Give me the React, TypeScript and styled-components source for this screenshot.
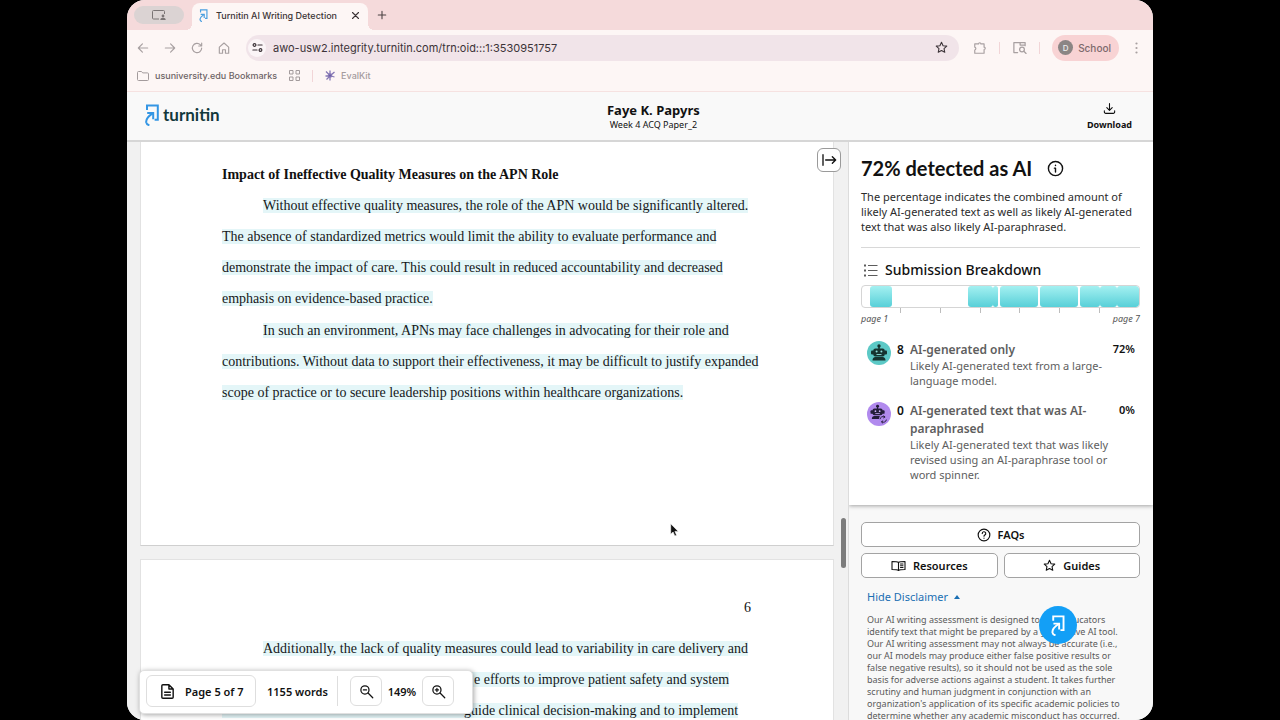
import React from "react";
import styled, { createGlobalStyle } from "styled-components";

const sans = `"Noto Sans", "Open Sans", sans-serif`;
const chromeFont = `Inter, "Liberation Sans", sans-serif`;
const serif = `"Liberation Serif", "Times New Roman", serif`;

const GlobalStyle = createGlobalStyle`
  *, *::before, *::after { box-sizing: border-box; }
  body { margin: 0; background: #000; overflow: hidden; }
  button, input { font: inherit; color: inherit; margin: 0; }
  h1, h2, h3, p, ul { margin: 0; padding: 0; }
  svg { display: block; flex: none; }
`;

/* ---------- Window ---------- */

const Desktop = styled.div`
  height: 100vh;
  padding: 0 127px;
  background: #000;
  font-family: ${sans};
  color: #111;
`;

const BrowserWindow = styled.div`
  display: flex;
  flex-direction: column;
  height: 100%;
  border-radius: 18px;
  overflow: hidden;
  background: #f8f8f8;
`;

/* ---------- Browser chrome ---------- */

const TabStrip = styled.div`
  display: flex;
  align-items: flex-end;
  height: 30px;
  padding-left: 7px;
  background: #f5dadb;
  font-family: ${chromeFont};
`;

const ScreenPill = styled.button`
  display: flex;
  align-items: center;
  justify-content: center;
  width: 50px;
  height: 18px;
  margin: 0 8px 6px 0;
  padding: 0;
  border: 0;
  border-radius: 9px;
  background: #dbd3d3;
  color: #7b7475;
`;

const Tab = styled.div`
  position: relative;
  display: flex;
  align-items: center;
  width: 176px;
  height: 27px;
  padding: 0 8px 3px 7px;
  border-radius: 8px 8px 0 0;
  background: #fdf6f5;
  color: #3c3436;
  font-size: 9px;
  font-weight: 500;
  white-space: nowrap;

  &::before,
  &::after {
    content: "";
    position: absolute;
    bottom: 0;
    width: 6px;
    height: 6px;
  }
  &::before {
    left: -6px;
    background: radial-gradient(circle at 0 0, transparent 6px, #fdf6f5 6px);
  }
  &::after {
    right: -6px;
    background: radial-gradient(circle at 100% 0, transparent 6px, #fdf6f5 6px);
  }
`;

const TabTitle = styled.span`
  flex: 1;
  margin-left: 8px;
`;

const BareButton = styled.button`
  display: flex;
  align-items: center;
  justify-content: center;
  padding: 0;
  border: 0;
  background: none;
`;

const NewTab = styled(BareButton)`
  width: 14px;
  height: 30px;
  margin-left: 7px;
  color: #4a4143;
`;

const NavBar = styled.div`
  display: flex;
  align-items: center;
  height: 35px;
  padding: 0 11px 0 9px;
  background: #fdf6f5;
  font-family: ${chromeFont};
  color: #a8a0a1;
`;

const NavButtons = styled.div`
  display: flex;
  gap: 13px;
  margin-right: 15px;
`;

const AddressBar = styled.label`
  display: flex;
  flex: 1;
  align-items: center;
  gap: 7px;
  height: 26px;
  padding: 0 11px 0 2px;
  border-radius: 13px;
  background: #f1e4e9;
  color: #3c3338;
`;

const SiteBadge = styled.span`
  display: flex;
  align-items: center;
  justify-content: center;
  width: 18px;
  height: 18px;
  border-radius: 50%;
  background: #fbf5f7;
`;

const AddressInput = styled.input`
  flex: 1;
  min-width: 0;
  padding: 0;
  border: 0;
  outline: 0;
  background: none;
  font-size: 11px;
`;

const NavTools = styled.div`
  display: flex;
  align-items: center;
  gap: 12px;
  margin-left: 14px;
`;

const Separator = styled.span`
  width: 1px;
  height: 12px;
  background: #f2d5d7;
`;

const ProfileChip = styled.button`
  display: flex;
  align-items: center;
  gap: 5px;
  height: 26px;
  padding: 0 8px 0 6px;
  border: 0;
  border-radius: 13px;
  background: #f8d3d4;
  color: #7d696c;
  font-size: 10px;
  font-weight: 500;
`;

const Avatar = styled.span`
  display: flex;
  align-items: center;
  justify-content: center;
  width: 15px;
  height: 15px;
  border-radius: 50%;
  background: #8b8584;
  color: #eee;
  font-size: 8px;
`;

const BookmarkBar = styled.div`
  display: flex;
  align-items: center;
  height: 27px;
  padding: 0 10px 5px;
  border-bottom: 1px solid #f6e2e1;
  background: #fdf6f5;
  font-family: ${chromeFont};
  font-size: 9px;
  font-weight: 500;
`;

const Bookmark = styled.a<{ $faded?: boolean }>`
  display: flex;
  align-items: center;
  gap: 6px;
  margin-right: 12px;
  color: ${(p) => (p.$faded ? "#a49b9d" : "#6d6466")};
  text-decoration: none;
`;

const BookmarkDivider = styled(Separator)`
  margin: 0 12px;
`;

/* ---------- App header ---------- */

const AppHeader = styled.header`
  display: flex;
  align-items: center;
  justify-content: space-between;
  height: 50px;
  padding: 2px 21px 0 18px;
  border-bottom: 2px solid #d6d6d6;
  background: #f9f9f9;
`;

const Brand = styled.a`
  display: flex;
  align-items: center;
  gap: 4px;
  padding-bottom: 4px;
  color: #12383c;
  font-family: Lato, sans-serif;
  font-size: 17px;
  font-weight: 700;
  line-height: 20px;
  text-decoration: none;
`;

const PaperTitle = styled.div`
  text-align: center;
`;

const Author = styled.h1`
  font-size: 13px;
  font-weight: 700;
  line-height: 16px;
`;

const PaperName = styled.p`
  font-size: 9px;
  line-height: 14px;
`;

const Download = styled.button`
  display: flex;
  flex-direction: column;
  align-items: center;
  gap: 4px;
  padding: 0 0 2px;
  border: 0;
  background: none;
  font-size: 9px;
  font-weight: 700;
  line-height: 12px;
`;

/* ---------- Document ---------- */

const Main = styled.main`
  display: flex;
  flex: 1;
  min-height: 0;
`;

const Viewer = styled.section`
  position: relative;
  flex: 1;
  min-width: 0;
  padding: 0 14px 0 13px;
  overflow: hidden;
  background: #f1f1f1;
`;

const Sheet = styled.article<{ $next?: boolean }>`
  padding: ${(p) => (p.$next ? "32px 82px 0 81px" : "17px 82px 136px 81px")};
  margin-bottom: 13px;
  border: 1px solid #e2e2e2;
  border-top-width: ${(p) => (p.$next ? "1px" : "0")};
  border-bottom-color: #cfcfcf;
  background: #fff;
  font-family: ${serif};
  font-size: 14px;
  line-height: 31px;
  white-space: nowrap;
`;

const SheetHeading = styled.h2`
  font-size: 14px;
  font-weight: 700;
`;

const Paragraph = styled.p`
  margin-bottom: 1px;
  text-indent: 41px;
`;

/* $lead is the marked stretch that runs under the page bar before the words. */
const Highlight = styled.mark<{ $lead?: number }>`
  padding-left: ${(p) => p.$lead ?? 0}px;
  background: #e4f6f8;
  color: #16181a;
`;

const SheetNumber = styled.div`
  margin-bottom: 10px;
  text-align: right;
`;

const ScrollThumb = styled.div`
  position: absolute;
  top: 376px;
  right: 2px;
  width: 5px;
  height: 50px;
  border-radius: 3px;
  background: #7c7c7c;
`;

const CollapseButton = styled.button`
  position: absolute;
  top: 6px;
  right: 7px;
  display: flex;
  align-items: center;
  justify-content: center;
  width: 24px;
  height: 24px;
  padding: 0;
  border: 1px solid #9a9a9a;
  border-radius: 6px;
  background: #fff;
`;

const Pointer = styled.svg`
  position: absolute;
  top: 381px;
  left: 543px;
`;

const PageBar = styled.div`
  position: absolute;
  bottom: 6px;
  left: 12px;
  display: flex;
  align-items: center;
  width: 334px;
  height: 44px;
  padding: 0 18px 2px 6px;
  border: 1px solid #e0e0e0;
  border-radius: 5px;
  background: #fff;
  box-shadow: 1px 1px 5px rgba(0, 0, 0, 0.35);
  font-size: 11px;
  font-weight: 600;
  white-space: nowrap;
`;

const PageButton = styled.button`
  display: flex;
  align-items: center;
  gap: 9px;
  height: 32px;
  width: 110px;
  padding: 0 12px;
  border: 1px solid #dedede;
  border-radius: 6px;
  background: #fff;
`;

const WordCount = styled.span`
  flex: 1;
  padding-left: 11px;
`;

const BarDivider = styled.span`
  width: 1px;
  height: 30px;
  margin-right: 12px;
  background: #dedede;
`;

const ZoomButton = styled.button`
  display: flex;
  align-items: center;
  justify-content: center;
  width: 32px;
  height: 30px;
  padding: 0;
  border: 1px solid #dedede;
  border-radius: 6px;
  background: #fff;
`;

const ZoomLevel = styled.span`
  width: 40px;
  text-align: center;
`;

/* ---------- Side panel ---------- */

const Panel = styled.aside`
  position: relative;
  width: 305px;
  border-left: 1px solid #dcdcdc;
  background: #f8f8f8;
  overflow: hidden;
`;

const ScoreCard = styled.section`
  padding: 15px 13px 23px 12px;
  background: #fff;
  box-shadow: 0 1px 4px rgba(0, 0, 0, 0.35);
`;

const ScoreTitle = styled.h2`
  display: flex;
  align-items: center;
  gap: 15px;
  font-family: Lato, sans-serif;
  font-size: 20px;
  font-weight: 700;
  line-height: 22px;
`;

const ScoreText = styled.p`
  margin-top: 10px;
  padding-bottom: 13px;
  border-bottom: 1px solid #d8d8d8;
  font-size: 11px;
  line-height: 15px;
  color: #2b2b2b;
`;

const SectionTitle = styled.h3`
  display: flex;
  align-items: center;
  gap: 7px;
  margin-top: 12px;
  padding-left: 2px;
  font-size: 14px;
  font-weight: 500;
  line-height: 20px;
`;

const Strip = styled.div`
  position: relative;
  display: flex;
  height: 23px;
  margin-top: 5px;
  border: 1px solid #d5d5d5;
  border-radius: 4px;
  overflow: hidden;
`;

const StripPart = styled.span<{ $filled?: boolean; $gap?: boolean }>`
  margin-right: ${(p) => (p.$gap ? "2px" : "0")};
  border-radius: 3px;
  background: ${(p) => (p.$filled ? "linear-gradient(#a4f0f1, #58d0d8)" : "none")};
`;

const Ticks = styled.div`
  display: grid;
  grid-template-columns: repeat(7, 1fr);
  height: 5px;

  span:not(:last-child) {
    border-right: 1px solid #bdbdbd;
  }
`;

const StripLabels = styled.div`
  display: flex;
  justify-content: space-between;
  padding-bottom: 2px;
  font-size: 9px;
  font-style: italic;
  line-height: 12px;
  color: #555;
`;

const Finding = styled.div`
  display: grid;
  grid-template-columns: 24px 13px 1fr auto;
  column-gap: 6px;
  padding: 0 5px 0 6px;
  margin-top: 14px;
`;

const FindingCount = styled.span`
  font-size: 12px;
  font-weight: 600;
  line-height: 18px;
`;

const FindingBody = styled.div`
  max-width: 200px;
  margin-left: -6px;
  color: #5e5e5e;
`;

const FindingName = styled.h3`
  font-size: 12px;
  font-weight: 600;
  line-height: 18px;
`;

const FindingText = styled.p`
  margin-top: -1px;
  font-size: 11px;
  line-height: 15px;
`;

const FindingShare = styled.span`
  font-size: 11px;
  font-weight: 600;
  line-height: 15px;
`;

const HelpArea = styled.section`
  padding: 17px 13px 0 12px;
`;

const HelpGrid = styled.div`
  display: grid;
  grid-template-columns: 1fr 1fr;
  gap: 6px;
`;

const HelpButton = styled.button<{ $wide?: boolean }>`
  display: flex;
  align-items: center;
  justify-content: center;
  gap: 7px;
  grid-column: ${(p) => (p.$wide ? "1 / -1" : "auto")};
  height: 25px;
  padding: 0;
  border: 1px solid #a3a3a3;
  border-radius: 5px;
  background: #fff;
  font-size: 11px;
  font-weight: 600;
`;

const DisclaimerToggle = styled.button`
  display: flex;
  align-items: center;
  gap: 6px;
  margin: 11px 0 0 6px;
  padding: 0;
  border: 0;
  background: none;
  color: #1a6fb3;
  font-size: 11px;
  line-height: 16px;
`;

const Disclaimer = styled.p`
  margin: 9px 0 0 6px;
  font-size: 9px;
  line-height: 12px;
  color: #5a5a5a;
  white-space: nowrap;
`;

const ChatButton = styled.button`
  position: absolute;
  right: 76px;
  bottom: 76px;
  display: flex;
  align-items: center;
  justify-content: center;
  width: 38px;
  height: 38px;
  padding: 0;
  border: 0;
  border-radius: 50%;
  background: #139ff6;
`;

/* ---------- Icons ---------- */

type StrokeProps = { w?: number; h?: number; box?: string; sw?: number; children: React.ReactNode };

const Stroke = ({ w = 14, h = w, box = "0 0 24 24", sw = 2, children }: StrokeProps) => (
  <svg width={w} height={h} viewBox={box} fill="none" stroke="currentColor" strokeWidth={sw}
    strokeLinecap="round" strokeLinejoin="round" aria-hidden="true">
    {children}
  </svg>
);

const Logo = ({ w, h, color }: { w: number; h: number; color: string }) => (
  <svg width={w} height={h} viewBox="0 0 14 22" fill="none" stroke={color} strokeWidth="2" aria-hidden="true">
    <path d="M2 6V1.400h10.800v14.400H9.600" />
    <path d="M2.200 9h6v6.200" />
    <path d="M8 9.200C4 11.800.8 15.400 1.200 18.400c.3 1.500 1.400 2.500 3.200 2.800" />
  </svg>
);

const star = <path d="m12 2.500 2.900 6.200 6.800.8-5 4.600 1.300 6.700L12 17.500l-6 3.300 1.300-6.700-5-4.600 6.800-.8z" />;

const Robot = ({ paraphrased }: { paraphrased?: boolean }) => (
  <svg width="24" height="24" viewBox="0 0 24 24" aria-hidden="true">
    <circle cx="12" cy="12" r="12" fill={paraphrased ? "#b18aee" : "#5cc9c6"} />
    <g transform={paraphrased ? "translate(0 -0.200) scale(.88)" : undefined}>
      <g fill={paraphrased ? "#231d3a" : "#16332f"}>
        <circle cx="12" cy="5" r="1.700" />
        <rect x="11.300" y="5" width="1.400" height="4" />
        <rect x="6.300" y="7.600" width="11.400" height="7.800" rx="2" />
        <rect x="4" y="9.600" width="3" height="4" rx="1" />
        <rect x="17" y="9.600" width="3" height="4" rx="1" />
        <path d="M5.500 19.500c0-2.200 1-3.500 3-3.500h7c2 0 3 1.300 3 3.500z" />
      </g>
      <g fill={paraphrased ? "#c9adf5" : "#8fe0dc"}>
        <circle cx="9.600" cy="10.600" r="1" />
        <circle cx="14.400" cy="10.600" r="1" />
        <rect x="9.500" y="13" width="5" height=".9" />
      </g>
    </g>
    {paraphrased && (
      <g>
        <circle cx="16.200" cy="17.400" r="4.400" fill="#b18aee" />
        <path d="M13 17.200a3 3 0 0 1 4.500-2.200M19.400 17.600a3 3 0 0 1-4.500 2.200M16.500 13.600l1.600 1.400-1.800 1M15.900 21.200l-1.600-1.400 1.800-1"
          fill="none" stroke="#2a2140" strokeWidth="1" />
      </g>
    )}
  </svg>
);

/* Runs of the submission along its seven pages; sizes are relative. */
const stripParts = [
  { size: 8, filled: false, gap: false },
  { size: 22, filled: true, gap: false },
  { size: 76, filled: false, gap: false },
  { size: 25, filled: true, gap: false },
  { size: 5, filled: true, gap: true },
  { size: 38, filled: true, gap: true },
  { size: 38, filled: true, gap: true },
  { size: 20, filled: true, gap: false },
  { size: 17, filled: true, gap: false },
  { size: 22, filled: true, gap: false },
];

export default function App() {
  return (
    <>
      <GlobalStyle />
      <Desktop>
        <BrowserWindow>
          <TabStrip>
            <ScreenPill aria-label="Screen sharing">
              <svg width="14" height="10" viewBox="0 0 14 10" aria-hidden="true">
                <path d="M7 9H1.500a1 1 0 0 1-1-1V1.500a1 1 0 0 1 1-1h10a1 1 0 0 1 1 1V4" fill="none" stroke="currentColor" />
                <circle cx="11" cy="6" r="1.400" fill="currentColor" />
                <path d="M8.300 10c0-1.500 1-2.300 2.700-2.300s2.700.8 2.700 2.300z" fill="currentColor" />
              </svg>
            </ScreenPill>
            <Tab>
              <Logo w={9} h={13} color="#4a9fe0" />
              <TabTitle>Turnitin AI Writing Detection</TabTitle>
              <BareButton aria-label="Close tab">
                <Stroke w={9} sw={3}><path d="M4 4l16 16M20 4 4 20" /></Stroke>
              </BareButton>
            </Tab>
            <NewTab aria-label="New tab">
              <Stroke w={10} sw={2.6}><path d="M12 3v18M3 12h18" /></Stroke>
            </NewTab>
          </TabStrip>

          <NavBar>
            <NavButtons>
              <BareButton aria-label="Back"><Stroke><path d="M20 12H4M11 5l-7 7 7 7" /></Stroke></BareButton>
              <BareButton aria-label="Forward"><Stroke><path d="M4 12h16M13 5l7 7-7 7" /></Stroke></BareButton>
              <BareButton aria-label="Reload"><Stroke><path d="M20 12a8 8 0 1 1-2.400-5.700L20 8.500M20 3.500v5h-5" /></Stroke></BareButton>
              <BareButton aria-label="Home"><Stroke><path d="M4 10.500 12 3.500l8 7V21h-5.500v-6h-5v6H4z" /></Stroke></BareButton>
            </NavButtons>
            <AddressBar>
              <SiteBadge>
                <Stroke w={11} sw={2.600}>
                  <circle cx="5.500" cy="6.500" r="3" /><path d="M13 6.500h9M2 17.500h9" /><circle cx="18.500" cy="17.500" r="3" />
                </Stroke>
              </SiteBadge>
              <AddressInput aria-label="Address" defaultValue="awo-usw2.integrity.turnitin.com/trn:oid:::1:3530951757" />
              <Stroke w={13}>{star}</Stroke>
            </AddressBar>
            <NavTools>
              <BareButton aria-label="Extensions">
                <Stroke><path d="M3 5h6.500a2 2 0 0 1 4 0H19v5.500a2 2 0 0 1 0 4V21H3v-5.500a2.600 2.600 0 0 0 0-5z" /></Stroke>
              </BareButton>
              <Separator />
              <BareButton aria-label="Search tabs">
                <Stroke w={15}><path d="M9 20H3V4h18v5M13 4v4h8" /><circle cx="16" cy="15" r="3.800" /><path d="m19 18 3.500 3.500" /></Stroke>
              </BareButton>
              <Separator />
              <ProfileChip><Avatar>D</Avatar>School</ProfileChip>
              <BareButton aria-label="Menu">
                <svg width="11" height="14" viewBox="0 0 11 14" fill="currentColor" aria-hidden="true">
                  <circle cx="5.500" cy="2.500" r="1.100" /><circle cx="5.500" cy="7" r="1.100" /><circle cx="5.500" cy="11.500" r="1.100" />
                </svg>
              </BareButton>
            </NavTools>
          </NavBar>

          <BookmarkBar>
            <Bookmark href="#bookmarks">
              <svg width="12" height="10" viewBox="0 0 12 10" fill="none" stroke="#a39b9c" aria-hidden="true">
                <path d="M.5 8.500v-7a1 1 0 0 1 1-1h3l1.200 1.400h4.800a1 1 0 0 1 1 1v5.600a1 1 0 0 1-1 1h-9a1 1 0 0 1-1-1z" />
              </svg>
              usuniversity.edu Bookmarks
            </Bookmark>
            <svg width="11" height="11" viewBox="0 0 11 11" fill="none" stroke="#a39b9c" aria-hidden="true">
              <path d="M.5.500h3.500v3.500H.5zM7 .5h3.500v3.500H7zM.5 7h3.500v3.500H.5zM7 7h3.500v3.500H7z" />
            </svg>
            <BookmarkDivider />
            <Bookmark href="#evalkit" $faded>
              <svg width="10" height="11" viewBox="0 0 10 11" fill="none" stroke="#8577b5" strokeWidth="1.300" aria-hidden="true">
                <path d="M1 1.500l3 3M5 .5v4M9.500 2 6 5M.5 6h4M9.500 7 6 6M5 6v4.500M1.500 9.500 4 7" />
                <circle cx="5" cy="5.500" r="1.600" fill="#6a5ba4" />
              </svg>
              EvalKit
            </Bookmark>
          </BookmarkBar>

          <AppHeader>
            <Brand href="#home"><Logo w={14} h={22} color="#3496e4" />turnitin</Brand>
            <PaperTitle>
              <Author>Faye K. Papyrs</Author>
              <PaperName>Week 4 ACQ Paper_2</PaperName>
            </PaperTitle>
            <Download>
              <Stroke w={13}><path d="M12 3v12M7 10.500l5 5 5-5M2.500 16v2.500A2.500 2.500 0 0 0 5 21h14a2.500 2.500 0 0 0 2.500-2.500V16" /></Stroke>
              Download
            </Download>
          </AppHeader>

          <Main>
            <Viewer>
              <Sheet>
                <SheetHeading>Impact of Ineffective Quality Measures on the APN Role</SheetHeading>
                <Paragraph>
                  <Highlight>
                    Without effective quality measures, the role of the APN would be significantly altered.<br />
                    The absence of standardized metrics would limit the ability to evaluate performance and<br />
                    demonstrate the impact of care. This could result in reduced accountability and decreased<br />
                    emphasis on evidence-based practice.
                  </Highlight>
                </Paragraph>
                <Paragraph>
                  <Highlight>
                    In such an environment, APNs may face challenges in advocating for their role and<br />
                    contributions. Without data to support their effectiveness, it may be difficult to justify expanded<br />
                    scope of practice or to secure leadership positions within healthcare organizations.
                  </Highlight>
                </Paragraph>
              </Sheet>
              <Sheet $next>
                <SheetNumber>6</SheetNumber>
                <Paragraph>
                  <Highlight>Additionally, the lack of quality measures could lead to variability in care delivery and</Highlight><br />
                  <Highlight $lead={252}>e efforts to improve patient safety and system</Highlight><br />
                  <Highlight $lead={242}>guide clinical decision-making and to implement</Highlight>
                </Paragraph>
              </Sheet>

              <ScrollThumb />
              <CollapseButton aria-label="Collapse panel">
                <Stroke w={16} sw={2}><path d="M3 4v16M7 12h15M17 7l5 5-5 5" /></Stroke>
              </CollapseButton>
              <Pointer width="9" height="14" viewBox="0 0 9 14" aria-hidden="true">
                <path d="M.7.800v10.400l2.400-2.200 1.700 4 1.800-.8-1.700-3.800h3.400z" fill="#111" stroke="#fff" strokeWidth=".6" />
              </Pointer>

              <PageBar>
                <PageButton>
                  <Stroke w={17}><path d="M14 2.500H5.500A1.500 1.500 0 0 0 4 4v16a1.500 1.500 0 0 0 1.500 1.500h13A1.500 1.500 0 0 0 20 20V8.500zM14 2.500v6h6M8 13h8M8 17h8" /></Stroke>
                  Page 5 of 7
                </PageButton>
                <WordCount>1155 words</WordCount>
                <BarDivider />
                <ZoomButton aria-label="Zoom out">
                  <Stroke w={15}><circle cx="9.500" cy="9.500" r="6.500" /><path d="m14.500 14.500 7.500 7.500M7 9.500h5" /></Stroke>
                </ZoomButton>
                <ZoomLevel>149%</ZoomLevel>
                <ZoomButton aria-label="Zoom in">
                  <Stroke w={15}><circle cx="9.500" cy="9.500" r="6.500" /><path d="m14.500 14.500 7.500 7.500M7 9.500h5M9.500 7v5" /></Stroke>
                </ZoomButton>
              </PageBar>
            </Viewer>

            <Panel>
              <ScoreCard>
                <ScoreTitle>
                  72% detected as AI
                  <Stroke w={17} sw={2}><circle cx="12" cy="12" r="10" /><path d="M12 11.500V17M12 7.500v.2M10.500 11.500H12" /></Stroke>
                </ScoreTitle>
                <ScoreText>
                  The percentage indicates the combined amount of<br />
                  likely AI-generated text as well as likely AI-generated<br />
                  text that was also likely AI-paraphrased.
                </ScoreText>
                <SectionTitle>
                  <svg width="15" height="13" viewBox="0 0 15 13" stroke="#5c5c5c" fill="none" aria-hidden="true">
                    <path d="M5 1.500h9.500M5 6.500h9.500M5 11.500h9.500" strokeWidth="1.200" />
                    <path d="M1 1.500h2M1 6.500h2M1 11.500h2" strokeWidth="2" />
                  </svg>
                  Submission Breakdown
                </SectionTitle>
                <Strip>
                  {stripParts.map((part, i) => (
                    <StripPart key={i} $filled={part.filled} $gap={part.gap} style={{ flex: `${part.size} 1 0` }} />
                  ))}
                </Strip>
                <Ticks>
                  <span /><span /><span /><span /><span /><span /><span />
                </Ticks>
                <StripLabels><span>page 1</span><span>page 7</span></StripLabels>

                <Finding>
                  <Robot />
                  <FindingCount>8</FindingCount>
                  <FindingBody>
                    <FindingName>AI-generated only</FindingName>
                    <FindingText>Likely AI-generated text from a large-<br />language model.</FindingText>
                  </FindingBody>
                  <FindingShare>72%</FindingShare>
                </Finding>
                <Finding>
                  <Robot paraphrased />
                  <FindingCount>0</FindingCount>
                  <FindingBody>
                    <FindingName>AI-generated text that was AI-<br />paraphrased</FindingName>
                    <FindingText>Likely AI-generated text that was likely<br />revised using an AI-paraphrase tool or<br />word spinner.</FindingText>
                  </FindingBody>
                  <FindingShare>0%</FindingShare>
                </Finding>
              </ScoreCard>

              <HelpArea>
                <HelpGrid>
                  <HelpButton $wide>
                    <Stroke w={14}><circle cx="12" cy="12" r="10" /><path d="M9 9.500a3 3 0 1 1 4.200 2.700c-.9.500-1.200.9-1.200 1.800M12 17.300v.2" /></Stroke>
                    FAQs
                  </HelpButton>
                  <HelpButton>
                    <Stroke w={15} h={12} box="0 0 30 24" sw={2.200}>
                      <path d="M15 5v16M15 5c-2-1.500-5-2-13-2v16c8 0 11 .5 13 2 2-1.500 5-2 13-2V3c-8 0-11 .5-13 2M19 8h5M19 11.500h5M19 15h5" />
                    </Stroke>
                    Resources
                  </HelpButton>
                  <HelpButton>
                    <Stroke w={13}>{star}</Stroke>
                    Guides
                  </HelpButton>
                </HelpGrid>
                <DisclaimerToggle aria-expanded="true">
                  Hide Disclaimer
                  <svg width="6" height="4" viewBox="0 0 6 4" fill="currentColor" aria-hidden="true"><path d="M0 4 3 0l3 4z" /></svg>
                </DisclaimerToggle>
                <Disclaimer>
                  Our AI writing assessment is designed to help educators<br />
                  identify text that might be prepared by a generative AI tool.<br />
                  Our AI writing assessment may not always be accurate (i.e.,<br />
                  our AI models may produce either false positive results or<br />
                  false negative results), so it should not be used as the sole<br />
                  basis for adverse actions against a student. It takes further<br />
                  scrutiny and human judgment in conjunction with an<br />
                  organization's application of its specific academic policies to<br />
                  determine whether any academic misconduct has occurred.
                </Disclaimer>
              </HelpArea>
              <ChatButton aria-label="Open help"><Logo w={14} h={21} color="#fff" /></ChatButton>
            </Panel>
          </Main>
        </BrowserWindow>
      </Desktop>
    </>
  );
}
